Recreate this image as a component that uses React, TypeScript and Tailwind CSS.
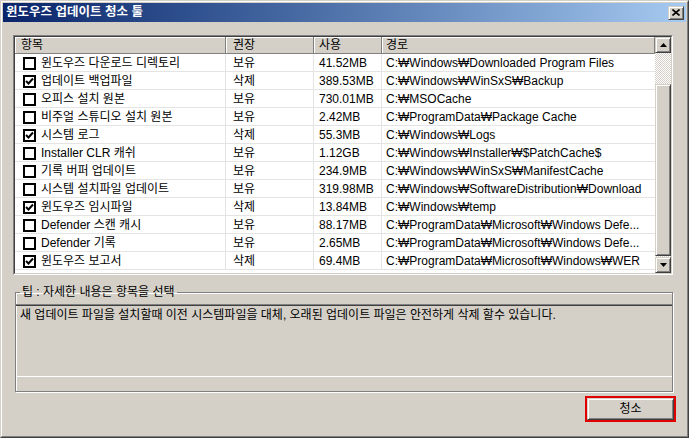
import React from 'react';

type Row = [boolean, string, string, string, string];

const rows: Row[] = [
  [false, '윈도우즈 다운로드 디렉토리', '보유', '41.52MB', 'C:₩Windows₩Downloaded Program Files'],
  [true, '업데이트 백업파일', '삭제', '389.53MB', 'C:₩Windows₩WinSxS₩Backup'],
  [false, '오피스 설치 원본', '보유', '730.01MB', 'C:₩MSOCache'],
  [false, '비주얼 스튜디오 설치 원본', '보유', '2.42MB', 'C:₩ProgramData₩Package Cache'],
  [true, '시스템 로그', '삭제', '55.3MB', 'C:₩Windows₩Logs'],
  [false, 'Installer CLR 캐쉬', '보유', '1.12GB', 'C:₩Windows₩Installer₩$PatchCache$'],
  [false, '기록 버퍼 업데이트', '보유', '234.9MB', 'C:₩Windows₩WinSxS₩ManifestCache'],
  [false, '시스템 설치파일 업데이트', '보유', '319.98MB', 'C:₩Windows₩SoftwareDistribution₩Download'],
  [true, '윈도우즈 임시파일', '삭제', '13.84MB', 'C:₩Windows₩temp'],
  [false, 'Defender 스캔 캐시', '보유', '88.17MB', 'C:₩ProgramData₩Microsoft₩Windows Defe...'],
  [false, 'Defender 기록', '보유', '2.65MB', 'C:₩ProgramData₩Microsoft₩Windows Defe...'],
  [true, '윈도우즈 보고서', '삭제', '69.4MB', 'C:₩ProgramData₩Microsoft₩Windows₩WER'],
];

// classic raised 3d edge
const raised =
  'border border-t-[#d4d0c8] border-l-[#d4d0c8] border-r-[#404040] border-b-[#404040] shadow-[inset_1px_1px_0_#ffffff,inset_-1px_-1px_0_#808080] bg-[#d4d0c8]';

function Check({ on }: { on: boolean }) {
  return (
    <div className="w-[13px] h-[13px] border-2 border-black bg-white flex items-center justify-center shrink-0">
      {on && (
        <svg width="9" height="9" viewBox="0 0 9 9">
          <path d="M1 4 L3.5 6.5 L8 1.5" stroke="#000" strokeWidth="2" fill="none" />
        </svg>
      )}
    </div>
  );
}

function ScrollButton({ up }: { up: boolean }) {
  return (
    <div className={`h-[16px] w-[16px] flex items-center justify-center ${raised}`}>
      <svg width="7" height="4" viewBox="0 0 7 4">
        <path d={up ? 'M3.5 0 L7 4 L0 4 Z' : 'M0 0 L7 0 L3.5 4 Z'} fill="#000" />
      </svg>
    </div>
  );
}

export default function App() {
  return (
    <div
      className="w-[689px] h-[438px] border border-t-[#d4d0c8] border-l-[#d4d0c8] border-r-[#404040] border-b-[#404040] bg-[#d4d0c8] text-[12px] text-black"
      style={{ fontFamily: '"Liberation Sans", "Noto Sans CJK KR", sans-serif' }}
    >
      <div className="h-full border border-t-white border-l-white border-r-[#808080] border-b-[#808080] p-[1px] flex flex-col">
        {/* Title bar */}
        <div className="h-[19px] flex items-center justify-between bg-gradient-to-r from-[#0a246a] to-[#a6caf0] pl-[3px] pr-[2px]">
          <span className="text-white font-bold leading-none text-[12.5px]">윈도우즈 업데이트 청소 툴</span>
          <div className={`w-[16px] h-[14px] flex items-center justify-center ${raised}`}>
            <svg width="8" height="7" viewBox="0 0 8 7">
              <path d="M0.5 0.5 L7.5 6.5 M7.5 0.5 L0.5 6.5" stroke="#000" strokeWidth="1.6" />
            </svg>
          </div>
        </div>

        {/* List */}
        <div className="mt-[13px] ml-[10px] mr-[13px] h-[240px] border border-t-[#808080] border-l-[#808080] border-r-white border-b-white">
          <div className="h-full border border-t-[#404040] border-l-[#404040] border-r-[#d4d0c8] border-b-[#d4d0c8] bg-white flex">
            <div className="flex-1 min-w-0">
              <div className="grid grid-cols-[211px_88px_68px_1fr] h-[17px] bg-[#d4d0c8] border-b border-[#808080]">
                {['항목', '권장', '사용', '경로'].map((h, i) => (
                  <div
                    key={h}
                    className={`border-r border-[#808080] shadow-[inset_1px_1px_0_#ffffff] flex items-center leading-none ${
                      i === 0 ? 'pl-[6px]' : i === 1 ? 'pl-[7px]' : i === 2 ? 'pl-[5px]' : 'pl-[4px]'
                    }`}
                  >
                    {h}
                  </div>
                ))}
              </div>
              {rows.map(([on, name, rec, size, path]) => (
                <div
                  key={name}
                  className="grid grid-cols-[211px_88px_68px_1fr] h-[18px] border-b border-[#e4e4e4] whitespace-nowrap"
                >
                  <div className="border-r border-[#e4e4e4] flex items-center gap-[5px] pl-[8px]">
                    <Check on={on} />
                    <span>{name}</span>
                  </div>
                  <div className="border-r border-[#e4e4e4] flex items-center pl-[7px]">{rec}</div>
                  <div className="border-r border-[#e4e4e4] flex items-center pl-[5px]">{size}</div>
                  <div className="flex items-center pl-[4px] overflow-hidden">{path}</div>
                </div>
              ))}
            </div>

            {/* Scrollbar */}
            <div className="w-[16px] flex flex-col">
              <ScrollButton up />
              <div className="flex-1 flex flex-col bg-[repeating-conic-gradient(#ffffff_0%_25%,#d4d0c8_0%_50%)] bg-[length:2px_2px]">
                <div className="h-[31px]" />
                <div className={`h-[172px] ${raised}`} />
              </div>
              <ScrollButton up={false} />
            </div>
          </div>
        </div>

        {/* Tip group */}
        <fieldset className="mt-[10px] ml-[12px] mr-[13px] border border-[#808080] shadow-[inset_1px_1px_0_#ffffff,1px_1px_0_#ffffff] pb-[14px]">
          <legend className="ml-[4px] px-[2px] leading-[14px]">팁 : 자세한 내용은 항목을 선택</legend>
          <div className="mt-[5px] h-[73px] border-t border-t-[#808080] border-b border-b-white shadow-[inset_0_1px_0_#404040] pt-[3px] pl-[4px] leading-[15px]">
            새 업데이트 파일을 설치할때 이전 시스템파일을 대체, 오래된 업데이트 파일은 안전하게 삭제 할수 있습니다.
          </div>
        </fieldset>

        {/* Button */}
        <div className="flex justify-end mt-[4px] mr-[10px]">
          <div className="w-[91px] h-[26px] border-2 border-[#e00000]">
            <div className={`h-full flex items-center justify-center ${raised}`}>청소</div>
          </div>
        </div>
      </div>
    </div>
  );
}
